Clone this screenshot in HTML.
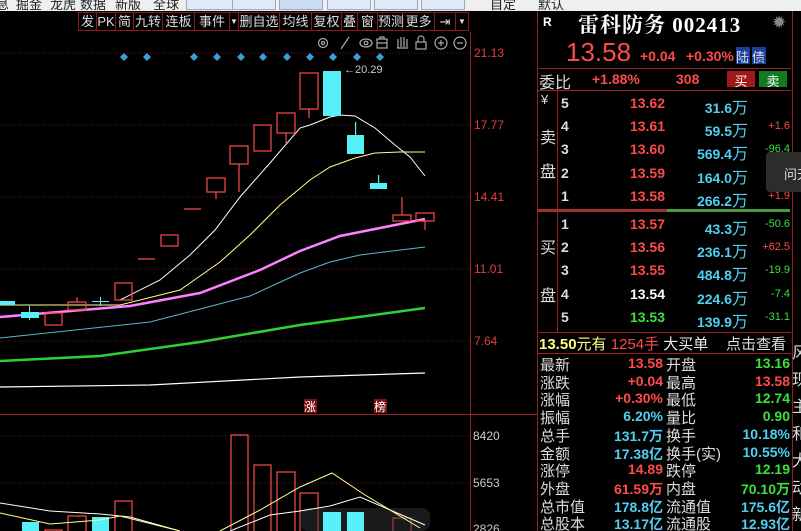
<!DOCTYPE html>
<html><head><meta charset="utf-8"><style>
html,body{margin:0;width:801px;height:531px;overflow:hidden}
body{background:#000;font-family:"Liberation Sans","Noto Sans CJK SC",sans-serif;position:relative}
.a{position:absolute;white-space:nowrap}
.top{left:0;top:0;width:801px;height:11px;background:#efefef;overflow:hidden}
.top span{position:absolute;top:-6px;font-size:13px;color:#222}
.tb{top:12px;height:19px;border:1px solid #8b1a1a;border-left:none;box-sizing:border-box;color:#ddd;font-size:13px;line-height:18px;text-align:center}
.r{color:#ff4a4a}.g{color:#3ce03c}.c{color:#4fd0f0}.w{color:#fff}.y{color:#ffff80}
.row{font-size:14px;font-weight:bold;font-family:"Liberation Sans","Noto Sans CJK SC",sans-serif}
.lbl{font-size:16px;color:#ddd}
.st{font-size:15px;color:#ddd}
</style></head><body>
<div class="a top">
<span style="left:-4px">息</span><span style="left:16px">掘金</span><span style="left:50px">龙虎</span><span style="left:80px">数据</span><span style="left:115px">新版</span><span style="left:153px">全球</span>
<div class="a" style="left:186px;top:-4px;width:50px;height:12px;background:#dfe9f7;border:1px solid #9ab"></div>
<div class="a" style="left:232px;top:-4px;width:42px;height:12px;background:#dfe9f7;border:1px solid #9ab"></div>
<div class="a" style="left:279px;top:-4px;width:42px;height:12px;background:#c9dcf3;border:1px solid #9ab"></div>
<div class="a" style="left:327px;top:-4px;width:42px;height:12px;background:#dfe9f7;border:1px solid #9ab"></div>
<div class="a" style="left:374px;top:-4px;width:42px;height:12px;background:#dfe9f7;border:1px solid #9ab"></div>
<div class="a" style="left:421px;top:-4px;width:42px;height:12px;background:#dfe9f7;border:1px solid #9ab"></div>
<span style="left:490px">自定</span><span style="left:538px">默认</span>
</div>
<div class="a" style="left:78px;top:12px;width:391px;height:19px;border-left:1px solid #8b1a1a"></div>
<div class="a tb" style="left:79px;width:18px">发</div>
<div class="a tb" style="left:97px;width:19px">PK</div>
<div class="a tb" style="left:116px;width:18px">简</div>
<div class="a tb" style="left:134px;width:29px">九转</div>
<div class="a tb" style="left:163px;width:32px">连板</div>
<div class="a tb" style="left:195px;width:35px">事件</div>
<div class="a tb" style="left:230px;width:9px;font-size:8px">▼</div>
<div class="a tb" style="left:239px;width:41px">删自选</div>
<div class="a tb" style="left:280px;width:32px">均线</div>
<div class="a tb" style="left:312px;width:30px">复权</div>
<div class="a tb" style="left:342px;width:16px">叠</div>
<div class="a tb" style="left:358px;width:20px">窗</div>
<div class="a tb" style="left:378px;width:25px">预测</div>
<div class="a tb" style="left:403px;width:32px">更多</div>
<div class="a tb" style="left:435px;width:21px">⇥</div>
<div class="a tb" style="left:456px;width:13px;font-size:8px">▼</div>
<svg class="a" style="left:0;top:0" width="537" height="531">
<g stroke="#aaa" fill="none" stroke-width="1.2">
<circle cx="323" cy="43" r="4.5"/><circle cx="323" cy="43" r="1.5"/>
<path d="M341 49 L349 37"/>
<ellipse cx="366" cy="43" rx="6" ry="4"/><circle cx="366" cy="43" r="1.8"/>
<rect x="377" y="39" width="10" height="9"/><path d="M377 43h10M380 39v-2h4v2"/>
<path d="M398 48 v-9 M401 47 v-10 M404 47 v-10 M407 47 v-8 M397 48 h11"/>
<rect x="416" y="42" width="10" height="7"/><path d="M418 42 v-3 a3 3 0 0 1 6 0 v3"/>
<circle cx="441" cy="43" r="6"/><path d="M438 43h6M441 40v6"/>
<circle cx="460" cy="43" r="6"/><path d="M457 43h6"/>
</g>
<line x1="470.5" y1="32" x2="470.5" y2="531" stroke="#9b1f1f"/>
<line x1="0" y1="414.5" x2="537" y2="414.5" stroke="#9b1f1f"/>
<g stroke="#6b1a1a" stroke-dasharray="1 2">
<line x1="0" y1="53" x2="470" y2="53"/><line x1="0" y1="125" x2="470" y2="125"/><line x1="0" y1="197" x2="470" y2="197"/><line x1="0" y1="269" x2="470" y2="269"/><line x1="0" y1="341" x2="470" y2="341"/>
<line x1="0" y1="436" x2="470" y2="436"/><line x1="0" y1="483" x2="470" y2="483"/>
</g>
<g font-size="12" fill="#e04040" font-family="Liberation Sans"><text x="474" y="57">21.13</text><text x="474" y="129">17.77</text><text x="474" y="201">14.41</text><text x="474" y="273">11.01</text><text x="474" y="345">7.64</text></g>
<g font-size="12" fill="#ccc" font-family="Liberation Sans"><text x="473" y="440">8420</text><text x="473" y="487">5653</text><text x="473" y="533">2826</text></g>
<g fill="#3aa0d8">
<path d="M124 53l4 4-4 4-4-4z M147 53l4 4-4 4-4-4z M194 53l4 4-4 4-4-4z M217 53l4 4-4 4-4-4z M241 53l4 4-4 4-4-4z M263 53l4 4-4 4-4-4z M287 53l4 4-4 4-4-4z M310 53l4 4-4 4-4-4z M333 53l4 4-4 4-4-4z M357 53l4 4-4 4-4-4z M380 53l4 4-4 4-4-4z"/>
</g>
<g fill="none">
<polyline stroke="#fff" stroke-width="1.2" points="0,387 150,385 300,377 425,373"/>
<polyline stroke="#30d030" stroke-width="2.5" points="0,361 100,356 200,342 300,325 425,308"/>
<polyline stroke="#5ab8c8" stroke-width="1" points="0,338 150,322 250,296 300,273 330,262 360,255 425,247"/>
<polyline stroke="#ff80ff" stroke-width="2.5" points="0,317 130,306 200,293 260,270 300,251 340,236 380,228 425,219"/>
<polyline stroke="#ffff90" stroke-width="1" points="0,305 120,305 180,290 220,262 250,235 280,205 310,180 330,167 355,158 375,153 400,152 425,152"/>
<polyline stroke="#fff" stroke-width="1" points="120,300 160,280 190,255 215,230 240,197 270,163 300,128 310,125 330,117 340,115 355,116 375,128 395,145 410,157 425,176"/>
</g>
<g stroke="#ff4a4a" fill="none" stroke-width="1.2">
<rect x="45" y="313" width="17" height="12"/>
<rect x="68" y="302" width="18" height="8"/><line x1="77" y1="297" x2="77" y2="302"/>
<rect x="115" y="283" width="17" height="17"/>
<line x1="138" y1="259" x2="155" y2="259"/>
<rect x="161" y="235" width="17" height="11"/>
<line x1="184" y1="209" x2="201" y2="209"/>
<rect x="207" y="178" width="18" height="14"/><line x1="216" y1="192" x2="216" y2="199"/>
<rect x="230" y="146" width="18" height="18"/><line x1="239" y1="164" x2="239" y2="192"/>
<rect x="254" y="125" width="17" height="26"/>
<rect x="277" y="113" width="18" height="20"/><line x1="286" y1="133" x2="286" y2="143"/>
<rect x="300" y="73" width="18" height="36"/><line x1="309" y1="109" x2="309" y2="118"/>
<rect x="393" y="215" width="18" height="6"/><line x1="402" y1="197" x2="402" y2="215"/>
<rect x="416" y="213" width="18" height="8"/><line x1="425" y1="221" x2="425" y2="230"/>
</g>
<g fill="#55f0f8">
<rect x="0" y="301" width="15" height="4"/>
<rect x="21" y="312" width="18" height="6"/><rect x="29" y="306" width="1" height="14"/>
<rect x="92" y="301" width="17" height="1"/><rect x="100" y="297" width="1" height="9"/>
<rect x="323" y="71" width="18" height="45"/>
<rect x="347" y="135" width="17" height="19"/><rect x="355" y="122" width="1.2" height="13"/>
<rect x="370" y="183" width="17" height="6"/><rect x="378" y="175" width="1.2" height="8"/>
</g>
<text x="344" y="73" font-size="11" fill="#ccc">←20.29</text>
<rect x="304" y="399" width="13" height="14" fill="#7a1010"/><text x="304" y="411" font-size="12" fill="#fff">涨</text>
<rect x="374" y="399" width="13" height="14" fill="#7a1010"/><text x="374" y="411" font-size="12" fill="#fff">榜</text>
<g stroke="#ff4a4a" fill="none" stroke-width="1.2">
<rect x="45" y="530" width="17" height="5"/><rect x="68" y="516" width="18" height="20"/><rect x="115" y="501" width="17" height="35"/>
<rect x="231" y="435" width="17" height="100"/><rect x="254" y="465" width="17" height="70"/><rect x="277" y="472" width="18" height="63"/><rect x="300" y="493" width="18" height="40"/><rect x="393" y="518" width="18" height="15"/>
</g>
<rect x="300" y="508" width="130" height="23" rx="8" fill="#333" opacity="0.5"/>
<g fill="#55f0f8"><rect x="22" y="522" width="17" height="10"/><rect x="92" y="517" width="17" height="15"/><rect x="323" y="512" width="18" height="20"/><rect x="347" y="512" width="17" height="20"/></g>
<polyline fill="none" stroke="#fff" points="0,503 50,511 100,514 130,517 180,531"/>
<polyline fill="none" stroke="#fff" points="230,531 270,515 300,511 330,506 360,497 425,525"/>
<polyline fill="none" stroke="#ffff90" points="0,513 50,524 100,520 120,516 180,531"/>
<polyline fill="none" stroke="#ffff90" points="220,531 260,510 300,487 332,473 365,495 420,528"/>
</svg>
<div class="a" style="left:537px;top:11px;width:254px;height:520px;border-left:1px solid #9b1f1f;border-right:1px solid #9b1f1f"></div>
<div class="a w" style="left:543px;top:15px;font-size:12px;font-weight:bold">R</div>
<div class="a w" style="left:578px;top:9px;font-size:21px;font-weight:bold;font-family:'Liberation Serif','Noto Serif CJK SC',serif;letter-spacing:1px">雷科防务 002413</div>
<div class="a" style="left:772px;top:13px;font-size:17px;color:#888">✹</div>
<div class="a r" style="left:566px;top:37px;font-size:26px">13.58</div>
<div class="a r row" style="left:640px;top:48px">+0.04</div>
<div class="a r row" style="left:686px;top:48px">+0.30%</div>
<div class="a" style="left:736px;top:47px;width:14px;height:17px;background:#1b3f9a;color:#ddd;font-size:13px">陆</div>
<div class="a" style="left:752px;top:47px;width:14px;height:17px;background:#1b3f9a;color:#ddd;font-size:13px">债</div>
<div class="a" style="left:538px;top:68px;width:253px;border-top:1px solid #9b1f1f"></div>
<div class="a lbl" style="left:539px;top:69px">委比</div>
<div class="a r row" style="left:592px;top:71px">+1.88%</div>
<div class="a r row" style="left:676px;top:71px">308</div>
<div class="a" style="left:727px;top:71px;width:28px;height:16px;background:#a01818;color:#fff;font-size:13px;text-align:center">买</div>
<div class="a" style="left:759px;top:71px;width:28px;height:16px;background:#137a1e;color:#fff;font-size:13px;text-align:center">卖</div>
<div class="a" style="left:538px;top:90px;width:253px;border-top:1px solid #9b1f1f"></div>
<div class="a" style="left:557px;top:90px;height:242px;border-left:1px solid #9b1f1f"></div>
<div class="a lbl" style="left:541px;top:92px;font-size:13px">¥</div>
<div class="a lbl" style="left:540px;top:124px">卖</div>
<div class="a lbl" style="left:540px;top:158px">盘</div>
<div class="a lbl" style="left:540px;top:234px">买</div>
<div class="a lbl" style="left:540px;top:282px">盘</div>
<div class="a" style="left:538px;top:209px;width:129px;height:3px;background:#a03030"></div>
<div class="a" style="left:667px;top:209px;width:123px;height:3px;background:#4a9a40"></div>
<div id="ob"></div>
<div class="a" style="left:538px;top:332px;width:253px;border-top:1px solid #9b1f1f"></div>
<div class="a st" style="left:539px;top:333px"><span class="y" style="font-weight:bold">13.50</span><span class="y">元有</span> <span class="r">1254手</span> <span style="color:#eee">大买单</span></div>
<div class="a st y" style="left:726px;top:333px">点击查看</div>
<div class="a" style="left:538px;top:353px;width:253px;border-top:1px solid #9b1f1f"></div>
<div class="a" style="left:766px;top:152px;width:40px;height:40px;background:#2c2c2c;border-radius:4px"></div>
<div class="a" style="left:784px;top:164px;font-size:13px;color:#ddd">问天</div>
<div class="a" style="left:792px;top:340px;width:10px;height:191px;overflow:hidden;font-size:16px;color:#ddd;line-height:27px;white-space:normal">风<br>现<br>主<br>和<br>大<br>动<br>新</div>
<script>
var ob=document.getElementById('ob'),h='';
var s=[[104,5,'13.62','31.6','',''],[127,4,'13.61','59.5','+1.6','r'],[150,3,'13.60','569.4','-96.4','g'],[174,2,'13.59','164.0','',''],[197,1,'13.58','266.2','+1.9','r'],
[225,1,'13.57','43.3','-50.6','g'],[248,2,'13.56','236.1','+62.5','r'],[271,3,'13.55','484.8','-19.9','g'],[295,4,'13.54','224.6','-7.4','g'],[318,5,'13.53','139.9','-31.1','g']];
s.forEach(function(r){var pc=r[2]=='13.54'?'w':(r[2]=='13.53'?'g':'r');
h+='<div class="a row" style="left:561px;top:'+(r[0]-9)+'px;color:#ddd">'+r[1]+'</div>';
h+='<div class="a row '+pc+'" style="right:136px;top:'+(r[0]-9)+'px">'+r[2]+'</div>';
h+='<div class="a row c" style="right:53px;top:'+(r[0]-10)+'px">'+r[3]+'<span style="font-weight:normal;font-size:16px">万</span></div>';
if(r[4])h+='<div class="a '+r[5]+'" style="right:11px;top:'+(r[0]-7)+'px;font-size:11px">'+r[4]+'</div>';});
var t=[['最新','13.58','r','开盘','13.16','g'],['涨跌','+0.04','r','最高','13.58','r'],['涨幅','+0.30%','r','最低','12.74','g'],['振幅','6.20%','c','量比','0.90','g'],['总手','131.7万','c','换手','10.18%','c'],['金额','17.38亿','c','换手(实)','10.55%','c'],['涨停','14.89','r','跌停','12.19','g'],['外盘','61.59万','r','内盘','70.10万','g'],['总市值','178.8亿','c','流通值','175.6亿','c'],['总股本','13.17亿','c','流通股','12.93亿','c']];
t.forEach(function(r,i){var y=354+i*17.7;
h+='<div class="a st" style="left:540px;top:'+y+'px">'+r[0]+'</div>';
h+='<div class="a row '+r[2]+'" style="right:138px;top:'+(y+1)+'px;font-size:14px">'+r[1]+'</div>';
h+='<div class="a st" style="left:666px;top:'+y+'px">'+r[3]+'</div>';
h+='<div class="a row '+r[5]+'" style="right:11px;top:'+(y+1)+'px;font-size:14px">'+r[4]+'</div>';});
ob.innerHTML=h;
</script>
</body></html>
